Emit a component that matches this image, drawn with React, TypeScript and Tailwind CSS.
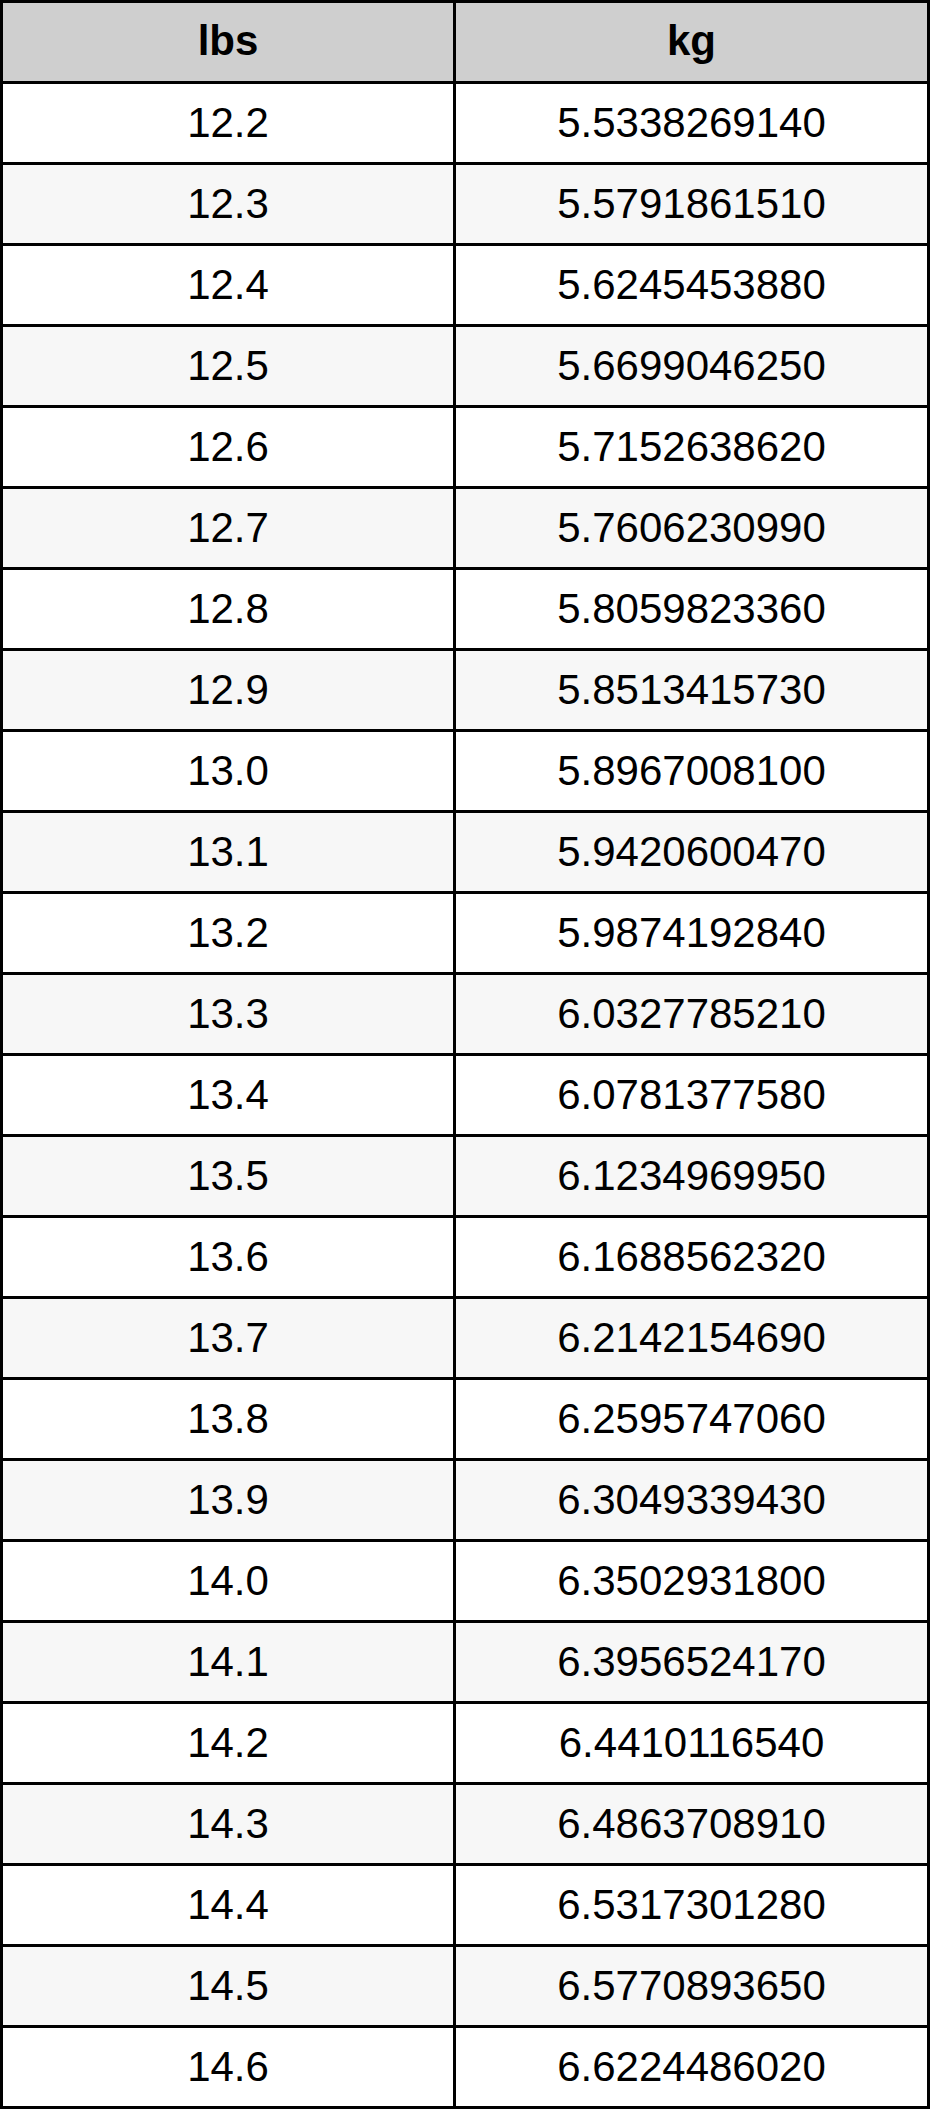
import React from "react";

const rows: [string, string][] = [
  ["12.2", "5.5338269140"],
  ["12.3", "5.5791861510"],
  ["12.4", "5.6245453880"],
  ["12.5", "5.6699046250"],
  ["12.6", "5.7152638620"],
  ["12.7", "5.7606230990"],
  ["12.8", "5.8059823360"],
  ["12.9", "5.8513415730"],
  ["13.0", "5.8967008100"],
  ["13.1", "5.9420600470"],
  ["13.2", "5.9874192840"],
  ["13.3", "6.0327785210"],
  ["13.4", "6.0781377580"],
  ["13.5", "6.1234969950"],
  ["13.6", "6.1688562320"],
  ["13.7", "6.2142154690"],
  ["13.8", "6.2595747060"],
  ["13.9", "6.3049339430"],
  ["14.0", "6.3502931800"],
  ["14.1", "6.3956524170"],
  ["14.2", "6.4410116540"],
  ["14.3", "6.4863708910"],
  ["14.4", "6.5317301280"],
  ["14.5", "6.5770893650"],
  ["14.6", "6.6224486020"],
];

export default function App() {
  return (
    <div className="w-[930px] bg-white font-['Liberation_Sans',Arial,sans-serif] text-black">
      <div className="border-l-[3px] border-t-[3px] border-black">
        <div className="flex h-[81px] bg-[#cfcfcf]">
          <div className="flex w-[453px] items-center justify-center border-b-[3px] border-r-[3px] border-black pb-[3px] text-[42px] font-bold">
            lbs
          </div>
          <div className="flex w-[474px] items-center justify-center border-b-[3px] border-r-[3px] border-black pb-[3px] text-[42px] font-bold">
            kg
          </div>
        </div>
        {rows.map(([a, b], i) => (
          <div
            key={a}
            className={`flex h-[81px] ${i % 2 === 1 ? "bg-[#f7f7f7]" : "bg-white"}`}
          >
            <div className="flex w-[453px] items-center justify-center border-b-[3px] border-r-[3px] border-black pb-[2px] text-[42px]">
              {a}
            </div>
            <div className="flex w-[474px] items-center justify-center border-b-[3px] border-r-[3px] border-black pb-[2px] text-[42px]">
              {b}
            </div>
          </div>
        ))}
      </div>
    </div>
  );
}
